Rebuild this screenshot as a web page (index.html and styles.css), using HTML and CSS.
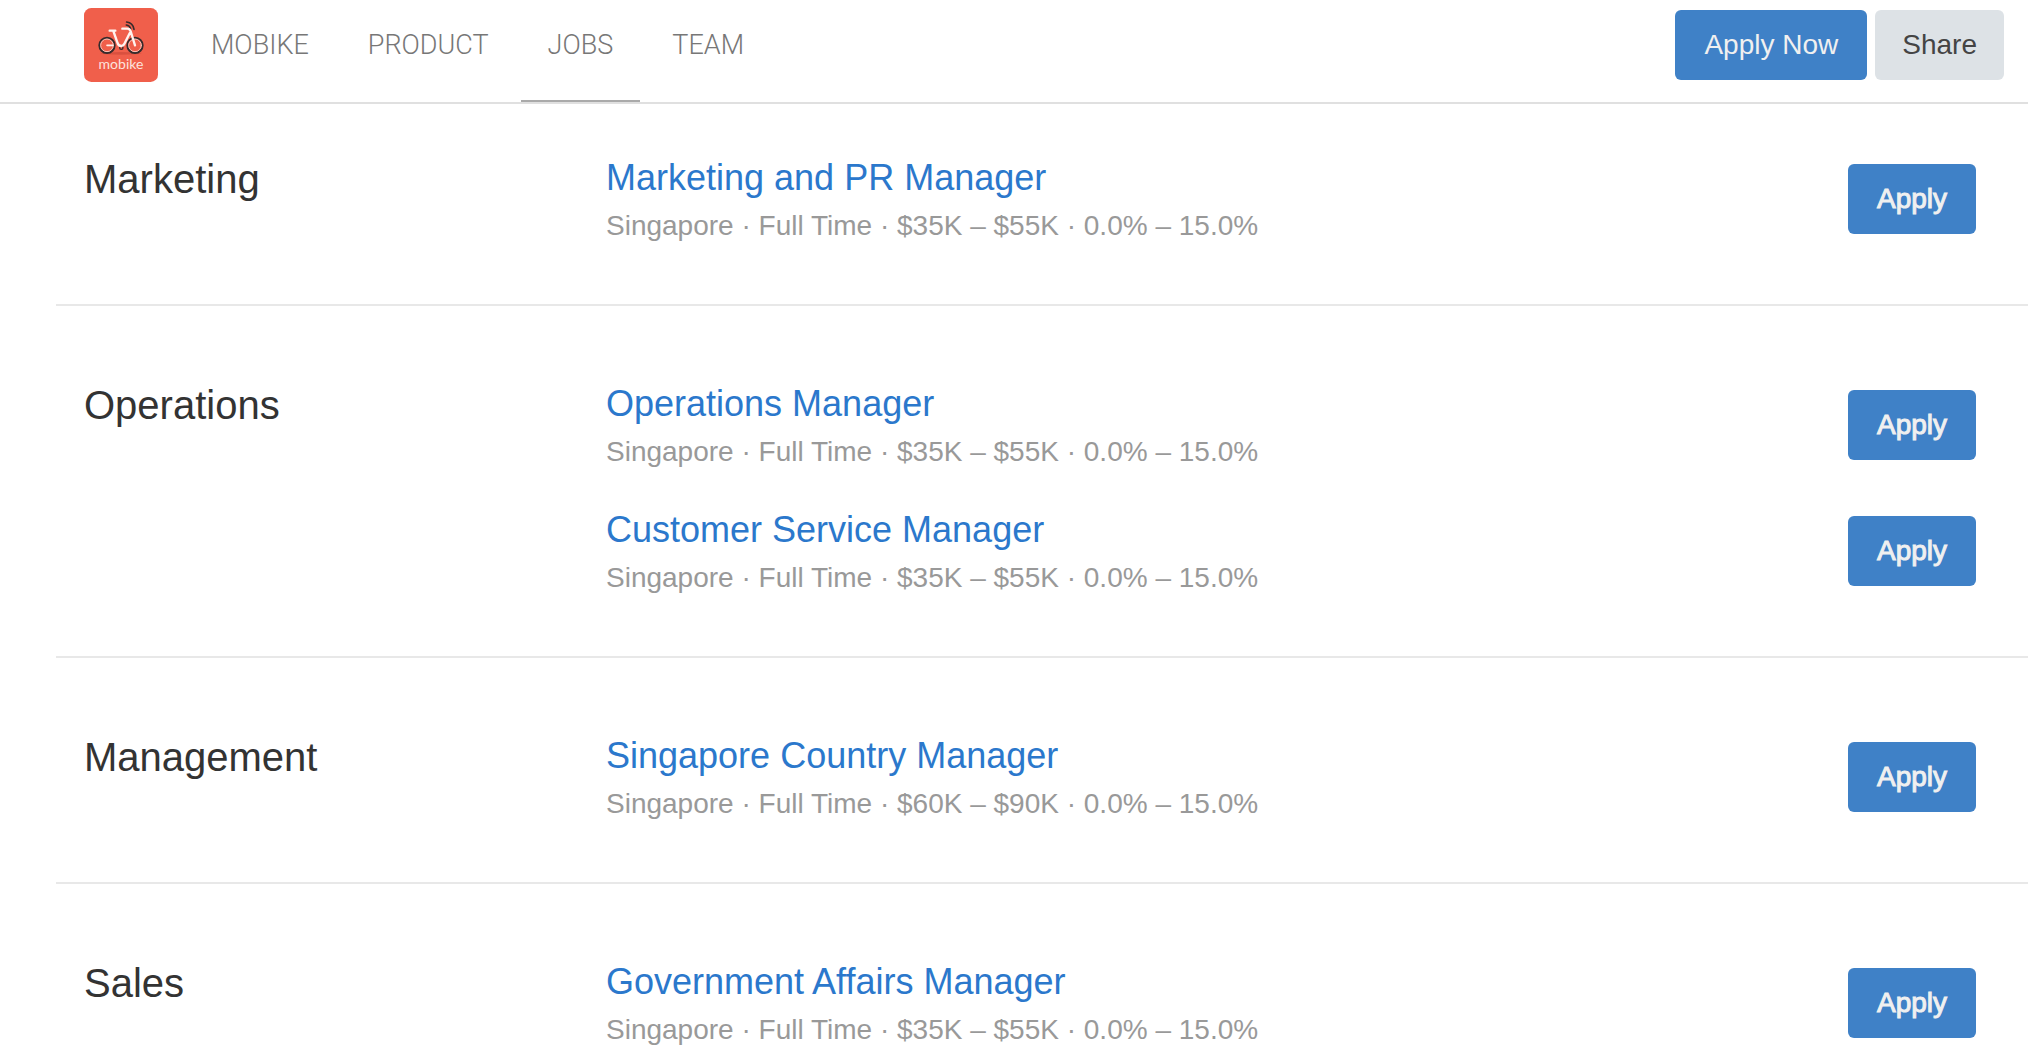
FILE: index.html
```html
<!DOCTYPE html>
<html lang="en">
<head>
<meta charset="utf-8">
<meta name="viewport" content="width=device-width, initial-scale=1">
<title>Mobike Jobs</title>
<link rel="stylesheet" href="styles.css">
</head>
<body>
<header class="topbar">
  <a class="logo" href="#" aria-label="Mobike">
    <svg viewBox="42 24 222 222" fill="none" stroke-linecap="round" stroke-linejoin="round">
      <rect x="42" y="24" width="222" height="222" rx="22" fill="#f05f4b"/>
      <ellipse cx="153" cy="160" rx="62" ry="4" fill="#d9503f"/>
      <g stroke="#352b2c" stroke-width="6">
        <circle cx="111" cy="136" r="23"/>
        <circle cx="195" cy="136" r="23"/>
        <path d="M170 66Q189 68 192 88M169 75Q180 77 182 87" stroke-width="5"/>
        <circle cx="154" cy="143" r="5" stroke-width="4"/>
      </g>
      <g stroke="#f9c4ba" stroke-width="3">
        <circle cx="111" cy="136" r="19"/>
        <circle cx="195" cy="136" r="19"/>
      </g>
      <g stroke="#fff3ef" stroke-width="7">
        <path d="M119 92H136M130 93L142 127Q145 138 154 138Q160 138 164 130L179 100M157 86H172Q179 86 182 94L195 136"/>
        <path d="M111 136H128" stroke-width="5"/>
      </g>
      <text class="logo-text" x="153" y="207" text-anchor="middle">mobike</text>
    </svg>
  </a>
  <nav class="nav">
    <a class="nav-link" href="#">MOBIKE</a>
    <a class="nav-link" href="#">PRODUCT</a>
    <a class="nav-link nav-link-active" href="#" aria-current="page">JOBS</a>
    <a class="nav-link" href="#">TEAM</a>
  </nav>
  <div class="actions">
    <button class="btn" type="button">Apply Now</button>
    <button class="btn btn-light" type="button">Share</button>
  </div>
</header>
<main class="listing">
  <section class="group">
    <h2 class="group-title">Marketing</h2>
    <ul class="jobs">
      <li class="job">
        <div class="job-info">
          <h3 class="job-title"><a href="#">Marketing and PR Manager</a></h3>
          <p class="job-meta">Singapore · Full Time · $35K – $55K · 0.0% – 15.0%</p>
        </div>
        <button class="btn btn-apply" type="button">Apply</button>
      </li>
    </ul>
  </section>
  <section class="group">
    <h2 class="group-title">Operations</h2>
    <ul class="jobs">
      <li class="job">
        <div class="job-info">
          <h3 class="job-title"><a href="#">Operations Manager</a></h3>
          <p class="job-meta">Singapore · Full Time · $35K – $55K · 0.0% – 15.0%</p>
        </div>
        <button class="btn btn-apply" type="button">Apply</button>
      </li>
      <li class="job">
        <div class="job-info">
          <h3 class="job-title"><a href="#">Customer Service Manager</a></h3>
          <p class="job-meta">Singapore · Full Time · $35K – $55K · 0.0% – 15.0%</p>
        </div>
        <button class="btn btn-apply" type="button">Apply</button>
      </li>
    </ul>
  </section>
  <section class="group">
    <h2 class="group-title">Management</h2>
    <ul class="jobs">
      <li class="job">
        <div class="job-info">
          <h3 class="job-title"><a href="#">Singapore Country Manager</a></h3>
          <p class="job-meta">Singapore · Full Time · $60K – $90K · 0.0% – 15.0%</p>
        </div>
        <button class="btn btn-apply" type="button">Apply</button>
      </li>
    </ul>
  </section>
  <section class="group">
    <h2 class="group-title">Sales</h2>
    <ul class="jobs">
      <li class="job">
        <div class="job-info">
          <h3 class="job-title"><a href="#">Government Affairs Manager</a></h3>
          <p class="job-meta">Singapore · Full Time · $35K – $55K · 0.0% – 15.0%</p>
        </div>
        <button class="btn btn-apply" type="button">Apply</button>
      </li>
    </ul>
  </section>
</main>
</body>
</html>
```
FILE: styles.css
```css
* {
  box-sizing: border-box;
}

body {
  margin: 0;
  background: #fff;
  color: #333;
  font-family: "Liberation Sans", Arial, sans-serif;
  font-size: 28px;
}

h2, h3, p, ul {
  margin: 0;
  padding: 0;
  font-weight: 400;
}

a {
  text-decoration: none;
}

.topbar {
  display: flex;
  align-items: flex-start;
  padding: 0 24px 0 84px;
  border-bottom: 2px solid #e0e0e0;
}

.logo {
  width: 74px;
  height: 74px;
  margin-top: 8px;
}

.logo svg {
  display: block;
  width: 100%;
}

.logo-text {
  fill: #fde3dd;
  font-family: Lato, sans-serif;
  font-size: 42px;
}

.nav {
  display: flex;
  gap: 5px;
  margin-left: 26px;
}

.nav-link {
  padding: 25px 27px 35px;
  border-bottom: 2px solid transparent;
  color: #777;
  font-family: Roboto, sans-serif;
  font-size: 27px;
  font-weight: 300;
  line-height: 40px;
}

.nav-link-active {
  border-bottom-color: #aaa;
}

.actions {
  display: flex;
  gap: 8px;
  margin: 10px 0 0 auto;
}

.btn {
  height: 70px;
  padding: 0 29px;
  border: 0;
  border-radius: 6px;
  background: #3f81c7;
  color: #f0f0f0;
  font: inherit;
  line-height: 70px;
  cursor: pointer;
}

.btn-light {
  padding: 0 27px;
  background: #dde2e6;
  color: #444;
}

.listing {
  padding-left: 56px;
}

.group {
  display: flex;
  padding: 74px 52px 54px 28px;
  border-bottom: 2px solid #e8e8e8;
}

.group:first-child {
  padding-top: 50px;
}

.group:last-child {
  padding-bottom: 0;
  border-bottom: 0;
}

.group-title {
  flex: 0 0 522px;
  font-size: 40px;
  line-height: 50px;
}

.jobs {
  display: flex;
  flex: 1;
  flex-direction: column;
  gap: 30px;
  list-style: none;
}

.job {
  display: flex;
  align-items: flex-start;
  justify-content: space-between;
}

.job-title {
  font-size: 36px;
  line-height: 48px;
}

.job-title a {
  color: #2b78cc;
}

.job-meta {
  color: #999;
  line-height: 48px;
}

.btn-apply {
  margin-top: 10px;
  -webkit-text-stroke: 1px #f0f0f0;
}
```
